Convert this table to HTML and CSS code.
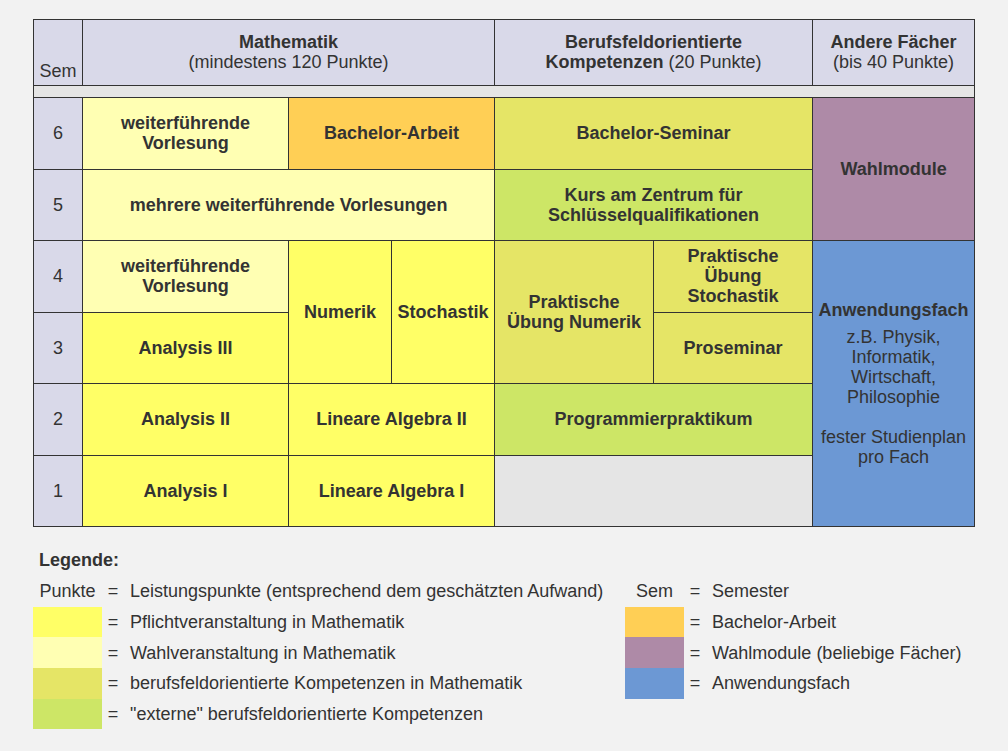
FILE: index.html
```html
<!DOCTYPE html>
<html lang="de">
<head>
<meta charset="utf-8">
<title>Studienplan Bachelor Mathematik</title>
<link rel="stylesheet" href="styles.css">
</head>
<body>
<div class="page">
  <table class="plan">
    <colgroup>
      <col class="c-sem">
      <col class="c-m1">
      <col class="c-m2">
      <col class="c-m3">
      <col class="c-b1">
      <col class="c-b2">
      <col class="c-a">
    </colgroup>
    <tr class="r-head">
      <td class="hd sem-head">Sem</td>
      <td class="hd" colspan="3"><b>Mathematik</b><br>(mindestens 120 Punkte)</td>
      <td class="hd" colspan="2"><b>Berufsfeldorientierte<br>Kompetenzen</b> (20 Punkte)</td>
      <td class="hd"><b>Andere Fächer</b><br>(bis 40 Punkte)</td>
    </tr>
    <tr class="r-gap"><td colspan="7" class="gap"></td></tr>
    <tr class="r-a">
      <td class="sem">6</td>
      <td class="cell wahl">weiterführende<br>Vorlesung</td>
      <td class="cell bachelor" colspan="2">Bachelor-Arbeit</td>
      <td class="cell beruf" colspan="2">Bachelor-Seminar</td>
      <td class="cell wahlmod" rowspan="2">Wahlmodule</td>
    </tr>
    <tr class="r-b">
      <td class="sem">5</td>
      <td class="cell wahl" colspan="3">mehrere weiterführende Vorlesungen</td>
      <td class="cell extern" colspan="2">Kurs am Zentrum für<br>Schlüsselqualifikationen</td>
    </tr>
    <tr class="r-a">
      <td class="sem">4</td>
      <td class="cell wahl">weiterführende<br>Vorlesung</td>
      <td class="cell pflicht" rowspan="2">Numerik</td>
      <td class="cell pflicht" rowspan="2">Stochastik</td>
      <td class="cell beruf" rowspan="2">Praktische<br>Übung Numerik</td>
      <td class="cell beruf">Praktische<br>Übung<br>Stochastik</td>
      <td class="cell anwendung" rowspan="4">
        <div class="anw-title">Anwendungsfach</div>
        <div class="anw-text">z.B. Physik,<br>Informatik,<br>Wirtschaft,<br>Philosophie<br><br>fester Studienplan<br>pro Fach</div>
      </td>
    </tr>
    <tr class="r-b">
      <td class="sem">3</td>
      <td class="cell pflicht">Analysis III</td>
      <td class="cell beruf">Proseminar</td>
    </tr>
    <tr class="r-a">
      <td class="sem">2</td>
      <td class="cell pflicht">Analysis II</td>
      <td class="cell pflicht" colspan="2">Lineare Algebra II</td>
      <td class="cell extern" colspan="2">Programmierpraktikum</td>
    </tr>
    <tr class="r-b">
      <td class="sem">1</td>
      <td class="cell pflicht">Analysis I</td>
      <td class="cell pflicht" colspan="2">Lineare Algebra I</td>
      <td class="cell empty" colspan="2"></td>
    </tr>
  </table>

  <div class="legend">
    <div class="legend-title">Legende:</div>
    <table class="legend-table">
      <colgroup>
        <col class="l-key">
        <col class="l-eq">
        <col class="l-desc">
        <col class="l-key2">
        <col class="l-eq">
        <col class="l-desc2">
      </colgroup>
      <tr>
        <td class="key">Punkte</td>
        <td class="eq">=</td>
        <td class="desc">Leistungspunkte (entsprechend dem geschätzten Aufwand)</td>
        <td class="key">Sem</td>
        <td class="eq">=</td>
        <td class="desc">Semester</td>
      </tr>
      <tr>
        <td class="key pflicht"></td>
        <td class="eq">=</td>
        <td class="desc">Pflichtveranstaltung in Mathematik</td>
        <td class="key bachelor"></td>
        <td class="eq">=</td>
        <td class="desc">Bachelor-Arbeit</td>
      </tr>
      <tr>
        <td class="key wahl"></td>
        <td class="eq">=</td>
        <td class="desc">Wahlveranstaltung in Mathematik</td>
        <td class="key wahlmod"></td>
        <td class="eq">=</td>
        <td class="desc">Wahlmodule (beliebige Fächer)</td>
      </tr>
      <tr>
        <td class="key beruf"></td>
        <td class="eq">=</td>
        <td class="desc">berufsfeldorientierte Kompetenzen in Mathematik</td>
        <td class="key anwendung"></td>
        <td class="eq">=</td>
        <td class="desc">Anwendungsfach</td>
      </tr>
      <tr>
        <td class="key extern"></td>
        <td class="eq">=</td>
        <td class="desc">"externe" berufsfeldorientierte Kompetenzen</td>
        <td class="key"></td>
        <td class="eq"></td>
        <td class="desc"></td>
      </tr>
    </table>
  </div>
</div>
</body>
</html>
```

FILE: styles.css
```css
html, body {
  margin: 0;
  padding: 0;
  background: #f2f2f2;
}

body {
  font-family: "Liberation Sans", Arial, sans-serif;
  font-size: 18px;
  line-height: 20px;
  color: #333333;
}

.page {
  width: 942px;
  margin: 0 auto;
  padding-top: 19px;
}

.plan {
  width: 942px;
  border-collapse: collapse;
  table-layout: fixed;
}

.c-sem { width: 49px; }
.c-m1 { width: 206px; }
.c-m2 { width: 103px; }
.c-m3 { width: 103px; }
.c-b1 { width: 159px; }
.c-b2 { width: 159px; }
.c-a { width: 162px; }

.plan td {
  border: 1px solid #333333;
  text-align: center;
  vertical-align: middle;
  padding: 0 2px 1px;
}

.r-head { height: 66px; }
.r-gap { height: 12px; }
.r-a { height: 72px; }
.r-b { height: 71px; }

.hd {
  background: #d9d9e9;
}

.hd b { font-weight: bold; }

.plan .sem-head {
  vertical-align: bottom;
  padding-bottom: 4px;
}

.plan .gap {
  background: #e5e5e5;
  padding: 0;
}

.sem {
  background: #d9d9e9;
}

.cell { font-weight: bold; }

.pflicht { background: #ffff66; }
.wahl { background: #ffffb3; }
.bachelor { background: #ffcf55; }
.beruf { background: #e5e566; }
.extern { background: #cde666; }
.wahlmod { background: #ae8aa7; }
.anwendung { background: #6c98d4; }
.empty { background: #e5e5e5; }

.anw-title {
  font-weight: bold;
  margin-bottom: 7px;
}

.anw-text {
  font-weight: normal;
}

.legend {
  margin-top: 18px;
}

.legend-title {
  font-weight: bold;
  padding: 0 6px;
  height: 31px;
  line-height: 30px;
}

.legend-table {
  border-collapse: collapse;
  table-layout: fixed;
  width: 942px;
}

.l-key { width: 69px; }
.l-eq { width: 22px; }
.l-desc { width: 501px; }
.l-key2 { width: 59px; }
.l-desc2 { width: 269px; }

.legend-table td {
  padding: 0;
  height: 30.7px;
  white-space: nowrap;
}

.legend-table .key {
  text-align: center;
}

.legend-table .eq {
  text-align: center;
}

.legend-table .desc {
  padding-left: 6px;
}
```
